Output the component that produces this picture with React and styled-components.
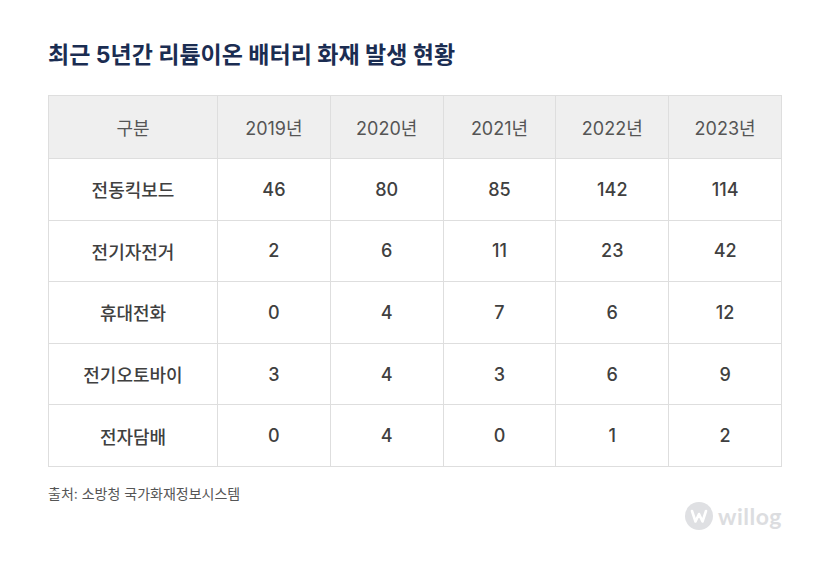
import React from 'react';
import styled, { createGlobalStyle } from 'styled-components';

const GlobalStyle = createGlobalStyle`
  html, body {
    margin: 0;
    padding: 0;
    background: #ffffff;
  }
  body {
    font-family: Inter, "Noto Sans CJK KR", "Noto Sans", sans-serif;
  }
`;

const Page = styled.div`
  width: 828px;
  height: 563px;
  box-sizing: border-box;
  padding: 39px 46px 0 48px;
`;

const Title = styled.h1`
  margin: 0 0 24px;
  font-size: 23px;
  line-height: 32px;
  font-weight: 700;
  color: #1b2d52;
  letter-spacing: 0;
`;

const Table = styled.table`
  width: 734px;
  border-collapse: collapse;
  table-layout: fixed;
`;

const HeadCell = styled.th`
  height: 62px;
  padding: 0;
  background: #efefef;
  border: 1px solid #dedede;
  font-size: 18px;
  font-weight: 400;
  color: #555555;
  text-align: center;
  width: ${p => (p.$wide ? '168px' : 'auto')};
`;

const Cell = styled.td`
  height: 60.6px;
  padding: 0;
  border: 1px solid #dedede;
  font-size: 18px;
  font-weight: 500;
  color: #404040;
  text-align: center;
`;

const Footer = styled.div`
  display: flex;
  justify-content: space-between;
  align-items: flex-start;
  margin-top: 17px;
`;

const Source = styled.p`
  margin: 0;
  font-size: 14px;
  line-height: 20px;
  color: #555555;
`;

const Logo = styled.div`
  display: flex;
  align-items: center;
  gap: 5px;
  margin-top: 18px;
`;

const LogoText = styled.span`
  font-family: "Lato", "Noto Sans", sans-serif;
  font-size: 23px;
  font-weight: 700;
  color: #dcdde0;
  letter-spacing: 0.5px;
  line-height: 28px;
`;

const years = ['2019년', '2020년', '2021년', '2022년', '2023년'];

const rows = [
  ['전동킥보드', 46, 80, 85, 142, 114],
  ['전기자전거', 2, 6, 11, 23, 42],
  ['휴대전화', 0, 4, 7, 6, 12],
  ['전기오토바이', 3, 4, 3, 6, 9],
  ['전자담배', 0, 4, 0, 1, 2],
];

const WillogMark = () => (
  <svg width="28" height="28" viewBox="0 0 28 28">
    <circle cx="14" cy="14" r="14" fill="#dfe0e3" />
    <polyline
      points="7,9 10.5,19.5 14,12 17.5,19.5 21,9"
      fill="none"
      stroke="#ffffff"
      strokeWidth="2.6"
      strokeLinecap="round"
      strokeLinejoin="round"
    />
  </svg>
);

const App = () => (
  <Page>
    <GlobalStyle />
    <Title>최근 5년간 리튬이온 배터리 화재 발생 현황</Title>
    <Table>
      <thead>
        <tr>
          <HeadCell $wide>구분</HeadCell>
          {years.map(y => (
            <HeadCell key={y}>{y}</HeadCell>
          ))}
        </tr>
      </thead>
      <tbody>
        {rows.map(([name, ...values]) => (
          <tr key={name}>
            <Cell>{name}</Cell>
            {values.map((v, i) => (
              <Cell key={i}>{v}</Cell>
            ))}
          </tr>
        ))}
      </tbody>
    </Table>
    <Footer>
      <Source>출처: 소방청 국가화재정보시스템</Source>
      <Logo>
        <WillogMark />
        <LogoText>willog</LogoText>
      </Logo>
    </Footer>
  </Page>
);

export default App;
